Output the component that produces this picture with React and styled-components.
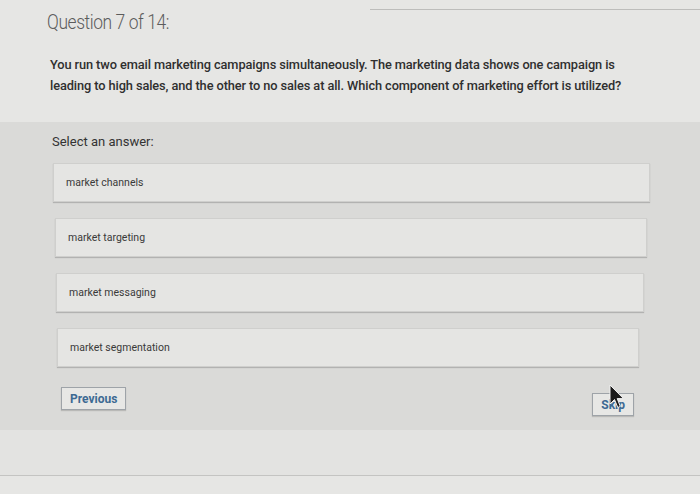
import React from 'react';
import styled, { createGlobalStyle } from 'styled-components';

const GlobalStyle = createGlobalStyle`
  html, body {
    margin: 0;
    padding: 0;
    background: #dcdcda;
  }
  body {
    font-family: Roboto, "Liberation Sans", Arial, sans-serif;
  }
`;

const Page = styled.div`
  width: 700px;
  height: 494px;
  overflow: hidden;
  display: flex;
  flex-direction: column;
  background: #e6e6e4;
`;

const TopRule = styled.div`
  height: 9px;
  margin-left: 370px;
  border-bottom: 1px solid #bdbdbb;
`;

const Header = styled.div`
  padding: 0 40px 0 47px;
  height: 112px;
  box-sizing: border-box;
`;

const Title = styled.h1`
  margin: 0;
  font-size: 21px;
  font-weight: 300;
  color: #5c5c5c;
  letter-spacing: -0.5px;
  line-height: 24px;
  transform: scaleX(0.83);
  transform-origin: left center;
  white-space: nowrap;
`;

const QuestionText = styled.p`
  margin: 20px 0 0 3px;
  max-width: 575px;
  font-size: 12.8px;
  font-weight: 500;
  color: #2f2f2f;
  line-height: 21px;
  letter-spacing: -0.1px;
`;

const AnswerArea = styled.div`
  background: #dadad8;
  height: 308px;
  padding: 12px 0 0 52px;
  box-sizing: border-box;
  display: flex;
  flex-direction: column;
  position: relative;
`;

const Prompt = styled.div`
  font-size: 13px;
  color: #333;
  margin-bottom: 14px;
`;

const Options = styled.div`
  display: flex;
  flex-direction: column;
  gap: 16px;
`;

const Option = styled.div`
  width: ${p => p.$w}px;
  margin-left: ${p => p.$shift}px;
  height: 39px;
  box-sizing: border-box;
  background: #e5e5e3;
  border: 1px solid #cfcfcd;
  box-shadow: 0 1px 1px rgba(0, 0, 0, 0.18);
  display: flex;
  align-items: center;
  padding-left: 12px;
  font-size: 10.5px;
  color: #3a3a3a;
`;

const Actions = styled.div`
  display: flex;
  justify-content: space-between;
  align-items: flex-start;
  margin-top: 20px;
  padding: 0 66px 0 9px;
`;

const NavButton = styled.button`
  font-family: Roboto, "Liberation Sans", Arial, sans-serif;
  background: #e7e7e5;
  border: 1px solid #9ea3a8;
  color: #3d6a93;
  font-weight: 700;
  font-size: 12px;
  padding: 0 8px;
  height: 23px;
  margin-top: ${p => p.$drop || 0}px;
  box-shadow: 0 1px 1px rgba(0, 0, 0, 0.15);
`;

const Cursor = styled.svg`
  position: absolute;
  left: 609px;
  top: 262px;
`;

const Footer = styled.div`
  height: 45px;
  background: #e3e3e1;
  border-bottom: 1px solid #c4c4c2;
`;

const Bottom = styled.div`
  flex: 1;
  background: #e6e6e4;
`;

const answers = [
  { text: 'market channels', w: 597, shift: 1 },
  { text: 'market targeting', w: 592, shift: 3 },
  { text: 'market messaging', w: 588, shift: 4 },
  { text: 'market segmentation', w: 582, shift: 5 },
];

export default function App() {
  return (
    <Page>
      <GlobalStyle />
      <TopRule />
      <Header>
        <Title>Question 7 of 14:</Title>
        <QuestionText>
          You run two email marketing campaigns simultaneously. The marketing data shows one campaign is
          leading to high sales, and the other to no sales at all. Which component of marketing effort is utilized?
        </QuestionText>
      </Header>
      <AnswerArea>
        <Prompt>Select an answer:</Prompt>
        <Options>
          {answers.map(a => (
            <Option key={a.text} $w={a.w} $shift={a.shift}>{a.text}</Option>
          ))}
        </Options>
        <Actions>
          <NavButton>Previous</NavButton>
          <NavButton $drop={6}>Skip</NavButton>
        </Actions>
        <Cursor width="16" height="26" viewBox="0 0 16 26">
          <path d="M1 1 L1 20 L5.5 15.5 L8.8 23.5 L11.3 22.4 L8.2 14.6 L14.5 14.6 Z" fill="#1a1a1a" stroke="#f0f0f0" strokeWidth="1" />
        </Cursor>
      </AnswerArea>
      <Footer />
      <Bottom />
    </Page>
  );
}
